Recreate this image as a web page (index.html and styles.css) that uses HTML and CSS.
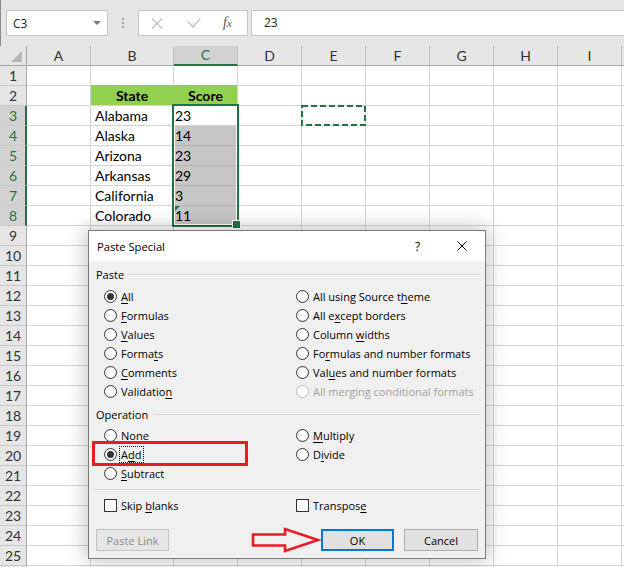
FILE: index.html
```html
<!DOCTYPE html>
<html>
<head>
<meta charset="utf-8">
<title>Paste Special</title>
<link rel="stylesheet" href="styles.css">
</head>
<body>
<div class="app">
  <div class="fbar">
    <div class="namebox"><span>C3</span><span class="dd"></span></div>
    <div class="grip"><span class="dot"></span><span class="dot"></span><span class="dot"></span></div>
    <div class="fbtns">
      <svg class="ico-cancel" width="12" height="11" viewBox="0 0 12 11"><path d="M1 0.5L11 10.5M11 0.5L1 10.5" stroke="#bfbfbf" stroke-width="1.2" fill="none"/></svg>
      <svg class="ico-enter" width="14" height="10" viewBox="0 0 14 10"><path d="M0.7 3.2L6 9L13.3 0.6" stroke="#bfbfbf" stroke-width="1.3" fill="none"/></svg>
      <span class="fx">f<span class="fx-x">x</span></span>
    </div>
    <div class="finput">23</div>
  </div>

  <div class="sheet">
    <div class="grid">
      <div class="ch corner"></div><div class="ch">A</div><div class="ch">B</div><div class="ch on">C</div><div class="ch">D</div><div class="ch">E</div><div class="ch">F</div><div class="ch">G</div><div class="ch">H</div><div class="ch">I</div><div class="ch"></div>

      <div class="rh">1</div><div class="c"></div><div class="c gtop"></div><div class="c gtop"></div><div class="c"></div><div class="c"></div><div class="c"></div><div class="c"></div><div class="c"></div><div class="c"></div><div class="c"></div>

      <div class="rh">2</div><div class="c"></div><div class="c hd hd-l">State</div><div class="c hd">Score</div><div class="c"></div><div class="c"></div><div class="c"></div><div class="c"></div><div class="c"></div><div class="c"></div><div class="c"></div>

      <div class="rh on">3</div><div class="c"></div><div class="c">Alabama</div><div class="c num">23</div><div class="c"></div><div class="c marq"><svg class="marquee" width="65" height="21" viewBox="0 0 65 21"><rect x="1" y="1" width="63" height="19" fill="none" stroke="#217346" stroke-width="2" stroke-dasharray="6 3"/></svg></div><div class="c"></div><div class="c"></div><div class="c"></div><div class="c"></div><div class="c"></div>

      <div class="rh on">4</div><div class="c"></div><div class="c">Alaska</div><div class="c num shade">14</div><div class="c"></div><div class="c"></div><div class="c"></div><div class="c"></div><div class="c"></div><div class="c"></div><div class="c"></div>

      <div class="rh on">5</div><div class="c"></div><div class="c">Arizona</div><div class="c num shade">23</div><div class="c"></div><div class="c"></div><div class="c"></div><div class="c"></div><div class="c"></div><div class="c"></div><div class="c"></div>

      <div class="rh on">6</div><div class="c"></div><div class="c">Arkansas</div><div class="c num shade">29</div><div class="c"></div><div class="c"></div><div class="c"></div><div class="c"></div><div class="c"></div><div class="c"></div><div class="c"></div>

      <div class="rh on">7</div><div class="c"></div><div class="c">California</div><div class="c num shade">3</div><div class="c"></div><div class="c"></div><div class="c"></div><div class="c"></div><div class="c"></div><div class="c"></div><div class="c"></div>

      <div class="rh on">8</div><div class="c"></div><div class="c">Colorado</div><div class="c num shade err">11</div><div class="c"></div><div class="c"></div><div class="c"></div><div class="c"></div><div class="c"></div><div class="c"></div><div class="c"></div>

      <div class="rh">9</div><div class="c"></div><div class="c"></div><div class="c"></div><div class="c"></div><div class="c"></div><div class="c"></div><div class="c"></div><div class="c"></div><div class="c"></div><div class="c"></div>
      <div class="rh">10</div><div class="c"></div><div class="c"></div><div class="c"></div><div class="c"></div><div class="c"></div><div class="c"></div><div class="c"></div><div class="c"></div><div class="c"></div><div class="c"></div>
      <div class="rh">11</div><div class="c"></div><div class="c"></div><div class="c"></div><div class="c"></div><div class="c"></div><div class="c"></div><div class="c"></div><div class="c"></div><div class="c"></div><div class="c"></div>
      <div class="rh">12</div><div class="c"></div><div class="c"></div><div class="c"></div><div class="c"></div><div class="c"></div><div class="c"></div><div class="c"></div><div class="c"></div><div class="c"></div><div class="c"></div>
      <div class="rh">13</div><div class="c"></div><div class="c"></div><div class="c"></div><div class="c"></div><div class="c"></div><div class="c"></div><div class="c"></div><div class="c"></div><div class="c"></div><div class="c"></div>
      <div class="rh">14</div><div class="c"></div><div class="c"></div><div class="c"></div><div class="c"></div><div class="c"></div><div class="c"></div><div class="c"></div><div class="c"></div><div class="c"></div><div class="c"></div>
      <div class="rh">15</div><div class="c"></div><div class="c"></div><div class="c"></div><div class="c"></div><div class="c"></div><div class="c"></div><div class="c"></div><div class="c"></div><div class="c"></div><div class="c"></div>
      <div class="rh">16</div><div class="c"></div><div class="c"></div><div class="c"></div><div class="c"></div><div class="c"></div><div class="c"></div><div class="c"></div><div class="c"></div><div class="c"></div><div class="c"></div>
      <div class="rh">17</div><div class="c"></div><div class="c"></div><div class="c"></div><div class="c"></div><div class="c"></div><div class="c"></div><div class="c"></div><div class="c"></div><div class="c"></div><div class="c"></div>
      <div class="rh">18</div><div class="c"></div><div class="c"></div><div class="c"></div><div class="c"></div><div class="c"></div><div class="c"></div><div class="c"></div><div class="c"></div><div class="c"></div><div class="c"></div>
      <div class="rh">19</div><div class="c"></div><div class="c"></div><div class="c"></div><div class="c"></div><div class="c"></div><div class="c"></div><div class="c"></div><div class="c"></div><div class="c"></div><div class="c"></div>
      <div class="rh">20</div><div class="c"></div><div class="c"></div><div class="c"></div><div class="c"></div><div class="c"></div><div class="c"></div><div class="c"></div><div class="c"></div><div class="c"></div><div class="c"></div>
      <div class="rh">21</div><div class="c"></div><div class="c"></div><div class="c"></div><div class="c"></div><div class="c"></div><div class="c"></div><div class="c"></div><div class="c"></div><div class="c"></div><div class="c"></div>
      <div class="rh">22</div><div class="c"></div><div class="c"></div><div class="c"></div><div class="c"></div><div class="c"></div><div class="c"></div><div class="c"></div><div class="c"></div><div class="c"></div><div class="c"></div>
      <div class="rh">23</div><div class="c"></div><div class="c"></div><div class="c"></div><div class="c"></div><div class="c"></div><div class="c"></div><div class="c"></div><div class="c"></div><div class="c"></div><div class="c"></div>
      <div class="rh">24</div><div class="c"></div><div class="c"></div><div class="c"></div><div class="c"></div><div class="c"></div><div class="c"></div><div class="c"></div><div class="c"></div><div class="c"></div><div class="c"></div>
      <div class="rh">25</div><div class="c"></div><div class="c"></div><div class="c"></div><div class="c"></div><div class="c"></div><div class="c"></div><div class="c"></div><div class="c"></div><div class="c"></div><div class="c"></div>
      <div class="rh"></div><div class="c"></div><div class="c"></div><div class="c"></div><div class="c"></div><div class="c"></div><div class="c"></div><div class="c"></div><div class="c"></div><div class="c"></div><div class="c"></div>
    </div>
    <div class="sel"></div>
  </div>

  <div class="dialog">
    <div class="dlg-title">
      <span class="dlg-caption">Paste Special</span>
      <span class="dlg-help">?</span>
      <span class="dlg-close"><svg width="10" height="10" viewBox="0 0 10 10"><path d="M0.5 0.5L9.5 9.5M9.5 0.5L0.5 9.5" stroke="#000" stroke-width="1" fill="none"/></svg></span>
    </div>
    <div class="dlg-body">
      <div class="group-label">Paste</div>
      <div class="opts opts-first">
        <div class="opt"><span class="radio on"></span><span><u>A</u>ll</span></div>
        <div class="opt"><span class="radio"></span><span>All using Source t<u>h</u>eme</span></div>
        <div class="opt"><span class="radio"></span><span><u>F</u>ormulas</span></div>
        <div class="opt"><span class="radio"></span><span>All e<u>x</u>cept borders</span></div>
        <div class="opt"><span class="radio"></span><span><u>V</u>alues</span></div>
        <div class="opt"><span class="radio"></span><span>Column <u>w</u>idths</span></div>
        <div class="opt"><span class="radio"></span><span>Forma<u>t</u>s</span></div>
        <div class="opt"><span class="radio"></span><span>Fo<u>r</u>mulas and number formats</span></div>
        <div class="opt"><span class="radio"></span><span><u>C</u>omments</span></div>
        <div class="opt"><span class="radio"></span><span>Val<u>u</u>es and number formats</span></div>
        <div class="opt"><span class="radio"></span><span>Validatio<u>n</u></span></div>
        <div class="opt disabled"><span class="radio"></span><span>All merging conditional formats</span></div>
      </div>
      <div class="group-label group-op">Operation</div>
      <div class="opts opts-op">
        <div class="opt"><span class="radio"></span><span>None</span></div>
        <div class="opt"><span class="radio"></span><span><u>M</u>ultiply</span></div>
        <div class="opt"><span class="radio on"></span><span class="focus">A<u>d</u>d</span></div>
        <div class="opt"><span class="radio"></span><span>D<u>i</u>vide</span></div>
        <div class="opt"><span class="radio"></span><span><u>S</u>ubtract</span></div>
        <div class="opt"></div>
      </div>
      <div class="sep"></div>
      <div class="opts">
        <div class="opt"><span class="check"></span><span>Skip <u>b</u>lanks</span></div>
        <div class="opt"><span class="check"></span><span>Transpos<u>e</u></span></div>
      </div>
      <div class="buttons">
        <button class="btn" disabled>Paste Link</button>
        <button class="btn ok">OK</button>
        <button class="btn cancel">Cancel</button>
      </div>
    </div>
  </div>

  <div class="callout-box"></div>
  <svg class="callout-arrow" width="72" height="30" viewBox="0 0 72 30"><polygon points="3,8.5 35,8.5 35,3 68,14 35,25 35,19.5 3,19.5" fill="none" stroke="#e81c24" stroke-width="2.6" stroke-linejoin="miter"/></svg>
</div>
</body>
</html>
```

FILE: styles.css
```css
* { box-sizing: border-box; }
html, body { margin: 0; padding: 0; }
body {
  width: 624px;
  height: 567px;
  overflow: hidden;
  background: #fff;
  font-family: "Open Sans", "Noto Sans", sans-serif;
  color: #000;
}
.app {
  position: relative;
  width: 624px;
  height: 567px;
  overflow: hidden;
}

/* formula bar */
.fbar {
  height: 46px;
  background: #e6e6e6;
  display: flex;
  align-items: flex-start;
  padding: 10px 0 0 5px;
  border-left: 1px solid #8c8c8c;
}
.namebox {
  width: 102px;
  height: 26px;
  background: #fff;
  border: 1px solid #c6c6c6;
  display: flex;
  align-items: center;
  padding-left: 6px;
  font-size: 12px;
  color: #222;
}
.dd {
  margin-left: auto;
  margin-right: 6px;
  width: 0;
  height: 0;
  border-left: 4px solid transparent;
  border-right: 4px solid transparent;
  border-top: 4px solid #7a7a7a;
}
.grip {
  margin-left: 14px;
  padding-top: 8px;
  display: flex;
  flex-direction: column;
  gap: 2px;
}
.dot {
  width: 2px;
  height: 2px;
  background: #a6a6a6;
}
.fbtns {
  margin-left: 14px;
  width: 110px;
  height: 26px;
  background: #fff;
  border: 1px solid #c6c6c6;
  display: flex;
  align-items: center;
  padding-left: 12px;
}
.ico-enter { margin-left: 24px; }
.fx {
  margin-left: 22px;
  font-family: "Liberation Serif", serif;
  font-style: italic;
  font-size: 14px;
  color: #555;
  line-height: 1;
}
.fx-x { font-size: 11px; }
.finput {
  flex: 1;
  margin-left: 3px;
  height: 26px;
  background: #fff;
  border: 1px solid #c6c6c6;
  border-right: none;
  padding-left: 12px;
  font-size: 12px;
  line-height: 24px;
  color: #222;
}

/* sheet */
.sheet { position: relative; }
.grid {
  display: grid;
  grid-template-columns: 27px 64px 83px 64px 64px 64px 64px 64px 64px 64px 1fr;
  grid-auto-rows: 20px;
  font-family: "Lato", "Open Sans", sans-serif;
  font-size: 14px;
}
.ch {
  background: #e6e6e6;
  border-right: 1px solid #bdbdbd;
  border-bottom: 1px solid #a6a6a6;
  text-align: center;
  line-height: 19px;
  color: #333;
}
.ch.on {
  background: #d2d2d2;
  color: #217346;
  border-bottom: 2px solid #217346;
  line-height: 18px;
}
.corner {
  position: relative;
  border-right-color: #a6a6a6;
}
.corner::after {
  content: "";
  position: absolute;
  right: 4px;
  bottom: 3px;
  width: 0;
  height: 0;
  border-left: 11px solid transparent;
  border-bottom: 11px solid #b6b6b6;
}
.rh {
  background: #e6e6e6;
  border-right: 1px solid #a6a6a6;
  border-bottom: 1px solid #c9c9c9;
  text-align: center;
  line-height: 19px;
  color: #333;
}
.rh.on {
  background: #d2d2d2;
  color: #217346;
  border-right: 2px solid #217346;
  padding-left: 1px;
}
.c {
  border-right: 1px solid #d4d4d4;
  border-bottom: 1px solid #d4d4d4;
  line-height: 19px;
  padding-left: 4px;
  white-space: nowrap;
}
.c.gtop { border-bottom-color: #92d050; }
.c.hd {
  background: #92d050;
  font-weight: bold;
  text-align: center;
  padding-left: 0;
}
.c.hd-l { border-right-color: #92d050; }
.c.num { padding-left: 1px; }
.c.shade {
  background: #c6c6c6;
  border-bottom-color: #b3b3b3;
}
.c.err { position: relative; }
.c.err::before {
  content: "";
  position: absolute;
  left: 0;
  top: 0;
  width: 0;
  height: 0;
  border-top: 6px solid #217346;
  border-right: 6px solid transparent;
}
.c.marq { position: relative; }
.marquee {
  position: absolute;
  left: -1px;
  top: -1px;
  display: block;
}
.sel {
  position: absolute;
  left: 172px;
  top: 58px;
  width: 67px;
  height: 123px;
  border: 2px solid #217346;
  box-shadow: inset 0 0 0 1px #fff;
  pointer-events: none;
}
.sel::after {
  content: "";
  position: absolute;
  right: -4px;
  bottom: -4px;
  width: 7px;
  height: 7px;
  background: #217346;
  border: 1px solid #fff;
}

/* dialog */
.dialog {
  position: absolute;
  left: 88px;
  top: 230px;
  width: 398px;
  height: 329px;
  border: 1px solid #7a7a7a;
  background: #f0f0f0;
  box-shadow: 0 0 18px 3px rgba(0, 0, 0, 0.22);
  font-family: "Open Sans", "Noto Sans", sans-serif;
  font-size: 11px;
  z-index: 5;
  display: flex;
  flex-direction: column;
}
.dlg-title {
  height: 30px;
  background: #fff;
  display: flex;
  align-items: center;
  padding-left: 8px;
  font-size: 11.2px;
}
.dlg-help {
  margin-left: auto;
  width: 46px;
  text-align: center;
  font-size: 12px;
  padding-left: 3px;
}
.dlg-close {
  width: 46px;
  display: flex;
  justify-content: center;
  align-items: center;
}
.dlg-close svg { display: block; }
.dlg-body {
  flex: 1;
  padding: 5px 5px 0 7px;
  display: flex;
  flex-direction: column;
}
.group-label {
  display: flex;
  align-items: center;
  height: 16px;
}
.group-label::after {
  content: "";
  flex: 1;
  height: 1px;
  background: #d9d9d9;
  margin-left: 3px;
}
.group-op { margin-top: 5px; }
.group-op::after { margin-left: 5px; }
.opts {
  display: grid;
  grid-template-columns: 192px 1fr;
  grid-auto-rows: 19px;
  padding-left: 8px;
}
.opts-first { margin-top: 5px; }
.opts-op { margin-top: 4px; }
.opt {
  display: flex;
  align-items: center;
  gap: 4px;
  white-space: nowrap;
}
.opt u { text-decoration-thickness: 1px; text-underline-offset: 2px; }
.radio {
  position: relative;
  width: 13px;
  height: 13px;
  border: 1px solid #333;
  border-radius: 50%;
  background: #fff;
  flex: none;
}
.radio.on::after {
  content: "";
  position: absolute;
  left: 2px;
  top: 2px;
  width: 7px;
  height: 7px;
  border-radius: 50%;
  background: #333;
}
.opt.disabled { color: #a0a0a0; }
.opt.disabled .radio { border-color: #bcbcbc; }
.focus {
  display: inline-block;
  line-height: 15px;
  padding: 0 2px 0 1px;
  margin-left: -1px;
  outline: 1px dotted #000;
}
.check {
  width: 13px;
  height: 13px;
  border: 1px solid #333;
  background: #fff;
  flex: none;
}
.sep {
  height: 1px;
  background: #d9d9d9;
  margin: 6px 0 6px -1px;
}
.buttons {
  margin-top: 14px;
  display: flex;
  padding-right: 2px;
}
.btn {
  width: 73px;
  height: 22px;
  padding: 0;
  background: #e1e1e1;
  border: 1px solid #adadad;
  font-family: "Open Sans", "Noto Sans", sans-serif;
  font-size: 11px;
  color: #000;
}
.btn:disabled {
  background: #e6e6e6;
  border-color: #c4c4c4;
  color: #8a8a8a;
}
.btn.ok {
  margin-left: auto;
  border: 2px solid #0078d7;
}
.btn.cancel {
  width: 74px;
  margin-left: 10px;
}

/* annotations */
.callout-box {
  position: absolute;
  left: 92px;
  top: 441px;
  width: 156px;
  height: 25px;
  border: 3px solid #e81c24;
  z-index: 6;
}
.callout-arrow {
  position: absolute;
  left: 250px;
  top: 526px;
  z-index: 6;
  display: block;
}
```
